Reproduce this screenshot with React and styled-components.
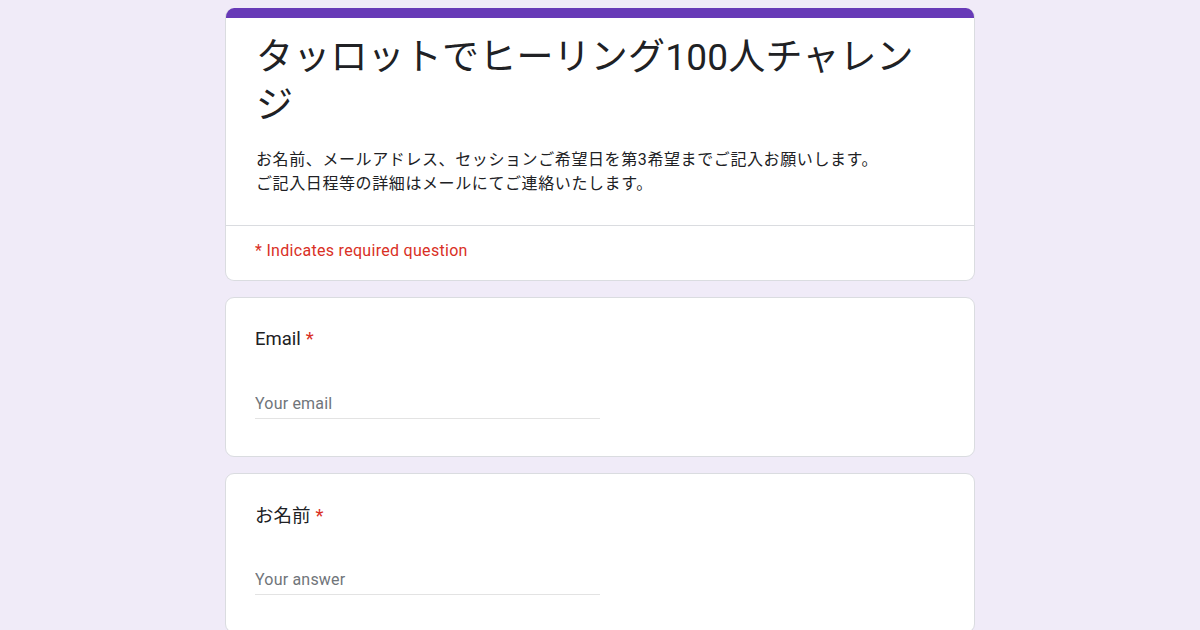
import React from "react";
import styled, { createGlobalStyle } from "styled-components";

const Global = createGlobalStyle`
  html, body { margin: 0; padding: 0; }
  body {
    background: #f0ebf8;
    font-family: Roboto, "Noto Sans CJK JP", sans-serif;
    color: #202124;
  }
`;

const Page = styled.main`
  width: 750px;
  margin: 0 auto;
  padding-top: 8px;
  display: flex;
  flex-direction: column;
  gap: 16px;
`;

const Card = styled.section`
  background: #fff;
  border: 1px solid #dadce0;
  border-radius: 9px;
  overflow: hidden;
`;

const HeaderCard = styled(Card)`
  border-top: none;
`;

const AccentBar = styled.div`
  height: 10px;
  background: #673ab7;
`;

const HeaderBody = styled.div`
  padding: 16px 30px 29px;
`;

const Title = styled.h1`
  margin: 0;
  font-family: Roboto, "Noto Sans CJK JP", sans-serif;
  font-weight: 400;
  font-size: 37px;
  line-height: 48px;
  letter-spacing: 0.2px;
  color: #202124;
`;

const Description = styled.p`
  margin: 18px 0 0;
  font-size: 16px;
  line-height: 24px;
  color: #202124;
  letter-spacing: 0.6px;
`;

const Divider = styled.hr`
  margin: 0;
  border: none;
  border-top: 1px solid #dadce0;
`;

const RequiredNote = styled.div`
  padding: 13px 29px 17px;
  font-size: 16px;
  line-height: 24px;
  letter-spacing: 0.3px;
  color: #d93025;
`;

const QuestionBody = styled.div`
  padding: ${(p) => p.$top}px 29px 37px;
  display: flex;
  flex-direction: column;
  gap: ${(p) => p.$gap}px;
`;

const Label = styled.div`
  font-size: 18.5px;
  line-height: 28px;
  color: #202124;
`;

const Star = styled.span`
  color: #d93025;
  margin-left: 5px;
`;

const TextInput = styled.input`
  width: 345px;
  box-sizing: border-box;
  border: none;
  border-bottom: 1px solid #e3e3e3;
  padding: 0 0 3px;
  font-family: Roboto, "Noto Sans CJK JP", sans-serif;
  font-size: 16px;
  line-height: 24px;
  letter-spacing: 0.2px;
  height: 28px;
  background: transparent;
  outline: none;
  &::placeholder { color: #70757a; }
`;

function Question({ label, placeholder, top, gap }) {
  return (
    <Card>
      <QuestionBody $top={top} $gap={gap}>
        <Label>
          {label}
          <Star>*</Star>
        </Label>
        <TextInput placeholder={placeholder} />
      </QuestionBody>
    </Card>
  );
}

export default function App() {
  return (
    <>
      <Global />
      <Page>
        <HeaderCard>
          <AccentBar />
          <HeaderBody>
            <Title>タッロットでヒーリング100人チャレンジ</Title>
            <Description>
              お名前、メールアドレス、セッションご希望日を第3希望までご記入お願いします。
              <br />
              ご記入日程等の詳細はメールにてご連絡いたします。
            </Description>
          </HeaderBody>
          <Divider />
          <RequiredNote>* Indicates required question</RequiredNote>
        </HeaderCard>
        <Question label="Email" placeholder="Your email" top={27} gap={38} />
        <Question label="お名前" placeholder="Your answer" top={28} gap={37} />
      </Page>
    </>
  );
}
